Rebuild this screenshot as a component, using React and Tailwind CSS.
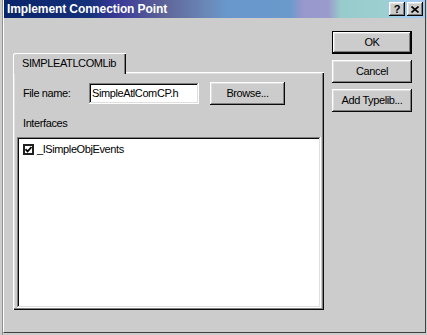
const raised =
  'shadow-[inset_-1px_-1px_#0a0a0a,inset_1px_1px_#ffffff,inset_-2px_-2px_#808080,inset_2px_2px_#dfdfdf]'
const sunken =
  'shadow-[inset_-1px_-1px_#ffffff,inset_1px_1px_#808080,inset_-2px_-2px_#dfdfdf,inset_2px_2px_#0a0a0a]'

function Button({ children, isDefault }) {
  if (isDefault) {
    return (
      <div className="w-[80px] h-[23px] border border-black bg-[#cccccc]">
        <div className={`w-full h-full flex items-center justify-center ${raised}`}>{children}</div>
      </div>
    )
  }
  return (
    <div className={`w-[80px] h-[23px] flex items-center justify-center bg-[#cccccc] ${raised}`}>
      {children}
    </div>
  )
}

function TitleButton({ children }) {
  return (
    <div className={`w-[16px] h-[14px] flex items-center justify-center bg-[#cccccc] ${raised}`}>
      {children}
    </div>
  )
}

export default function App() {
  return (
    <div className="w-[427px] h-[335px] flex bg-[#cccccc] overflow-hidden text-[11px] tracking-[-0.4px] text-black font-['Liberation_Sans',Arial,sans-serif]">
      <div className="w-[3px] h-full border-r border-[#909090]" />
      <div className="flex-1 flex flex-col mr-[1px] mb-[2px] border-l border-white border-r border-b border-r-[#404040] border-b-[#404040]">
        {/* title bar */}
        <div className="h-[18px] flex items-center justify-between pl-[3px] pr-[2px] bg-[linear-gradient(90deg,#0a246a_0%,#14307a_20%,#3a3a98_27%,#5e6498_38%,#6a88b8_48%,#6898cc_53%,#6a9acc_68%,#9898cc_71%,#9a9acc_77%,#98cccc_80%,#9ccfd0_90%,#a0ccf0_95%,#a6caf0_100%)]">
          <span className="text-white font-bold text-[12px] tracking-[-0.1px] leading-none">
            Implement Connection Point
          </span>
          <div className="flex gap-[2px]">
            <TitleButton>
              <span className="font-bold text-[11px] leading-none tracking-normal">?</span>
            </TitleButton>
            <TitleButton>
              <svg width="8" height="7" viewBox="0 0 8 7">
                <path d="M0.5 0.5 L7.5 6.5 M7.5 0.5 L0.5 6.5" stroke="black" strokeWidth="1.6" />
              </svg>
            </TitleButton>
          </div>
        </div>

        {/* body */}
        <div className="flex-1 flex pl-[9px]">
          <div className="w-[311px] pt-[35px] flex flex-col">
            <div className="relative z-10 -mb-[2px] w-[113px] h-[21px] bg-[#cccccc] rounded-tl-[2px] shadow-[inset_1px_1px_#ffffff,inset_-1px_0_#0a0a0a,inset_-2px_0_#808080] flex items-center pl-[9px] pb-[1px]">
              SIMPLEATLCOMLib
            </div>
            <div className={`h-[238px] px-[4px] pt-[10px] ${'shadow-[inset_1px_1px_#ffffff,inset_-1px_-1px_#0a0a0a,inset_-2px_-2px_#808080,inset_2px_2px_#dfdfdf]'}`}>
              <div className="flex items-center h-[23px] ml-[6px]">
                <span className="w-[66px]">File name:</span>
                <div className={`w-[110px] h-[21px] bg-white flex items-center pl-[3px] ${sunken}`}>
                  SimpleAtlComCP.h
                </div>
                <div className="ml-[11px]">
                  <div className={`w-[75px] h-[23px] flex items-center justify-center ${raised}`}>Browse...</div>
                </div>
              </div>
              <div className="ml-[6px] mt-[12px] leading-[13px]">Interfaces</div>
              <div className={`mt-[7px] w-[304px] h-[171px] bg-white pt-[6px] pl-[6px] ${sunken}`}>
                <div className="flex items-center gap-[3px]">
                  <div className="w-[11px] h-[11px] bg-white border-2 border-[#202020] flex items-center justify-center">
                    <svg width="7" height="7" viewBox="0 0 7 7">
                      <path d="M0.5 3.2 L2.6 5.4 L6.5 1" stroke="black" strokeWidth="1.7" fill="none" />
                    </svg>
                  </div>
                  <span className="leading-[13px]">_ISimpleObjEvents</span>
                </div>
              </div>
            </div>
          </div>

          <div className="ml-[8px] pt-[13px] flex flex-col gap-[6px]">
            <Button isDefault>OK</Button>
            <Button>Cancel</Button>
            <Button>Add Typelib...</Button>
          </div>
        </div>
      </div>
    </div>
  )
}
